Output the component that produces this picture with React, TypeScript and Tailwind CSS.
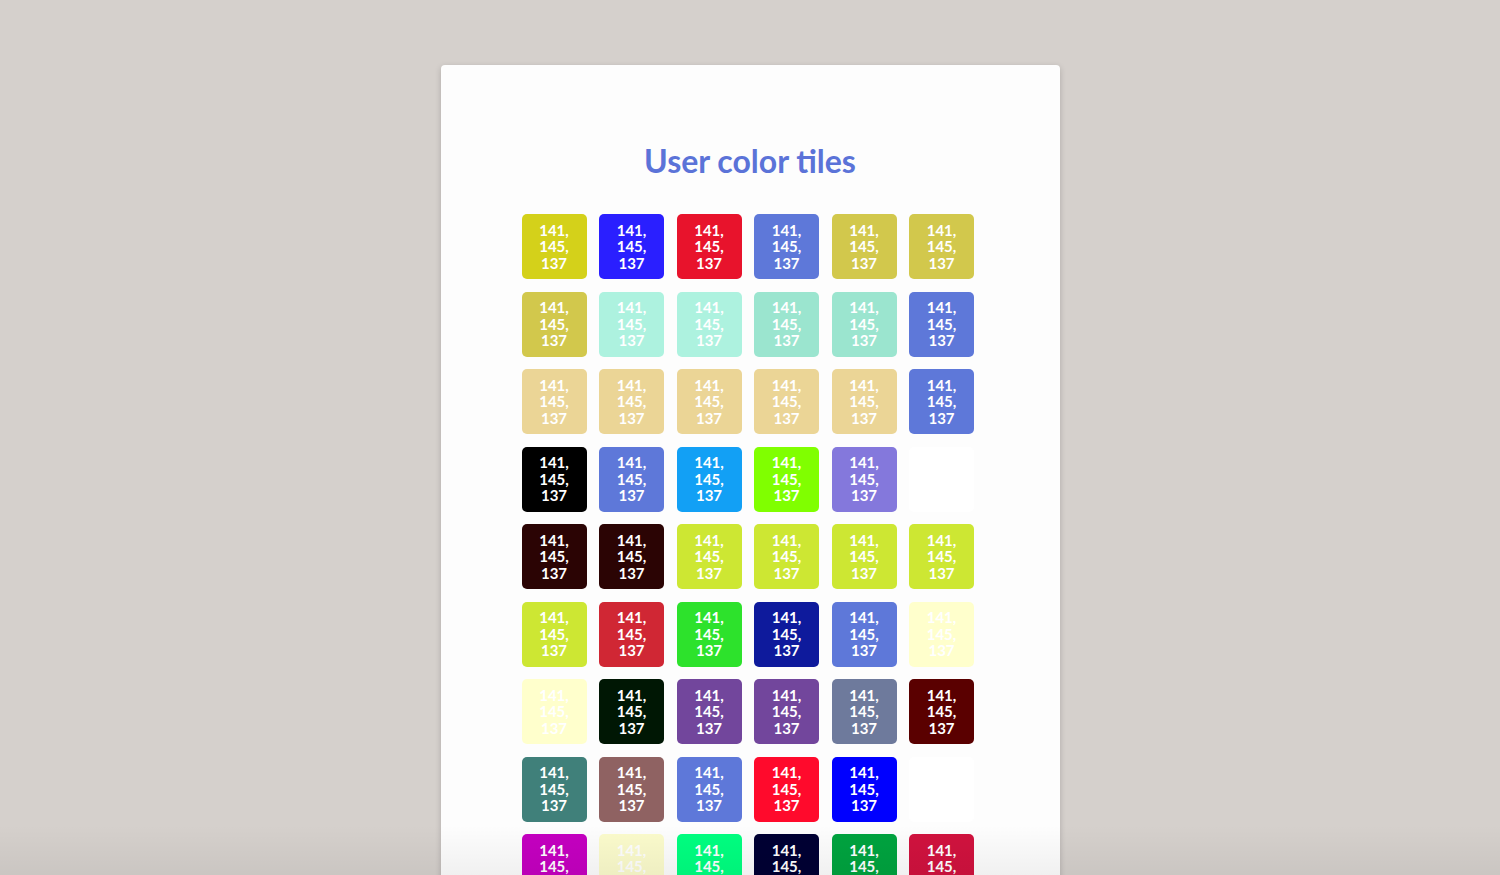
import React from "react";

const rows: string[][] = [
  ["#d4d11a", "#2a1fff", "#e8132c", "#5e78d9", "#d2c84c", "#d2c84c"],
  ["#d2c84c", "#adf2df", "#adf2df", "#9be5cf", "#9be5cf", "#5e78d9"],
  ["#ebd596", "#ebd596", "#ebd596", "#ebd596", "#ebd596", "#5e78d9"],
  ["#000000", "#5e78d9", "#12a0f5", "#80ff00", "#8478dc", "#ffffff"],
  ["#2b0404", "#2b0404", "#cde733", "#cde733", "#cde733", "#cde733"],
  ["#cde733", "#d02734", "#2de22c", "#0e1a9c", "#5e78d9", "#ffffcc"],
  ["#ffffcc", "#001704", "#72469c", "#72469c", "#6e7a9c", "#5a0000"],
  ["#40807a", "#8f6262", "#5e78d9", "#ff0a2c", "#0000ff", "#ffffff"],
  ["#c400c0", "#fbfbcc", "#00ff80", "#000033", "#00a33f", "#d0123e"],
];

export default function App() {
  return (
    <div className="relative h-[875px] w-full overflow-hidden bg-[#d5d0cc]" style={{ fontFamily: "Lato, 'Open Sans', sans-serif" }}>
      <div className="mx-auto mt-[65px] w-[619px] min-h-[900px] rounded-[4px] bg-[#fdfdfd] shadow-[0_2px_6px_rgba(0,0,0,0.18)]">
        <div className="pt-[77px]">
          <h1 className="text-center text-[32px] font-bold leading-[38px] text-[#5b73d8]">User color tiles</h1>
        </div>
        <div className="mt-[34px] pl-[81px]">
          <div className="grid grid-cols-[repeat(6,65px)] gap-[12.5px]">
            {rows.flat().map((c, i) => (
              <div
                key={i}
                className="flex h-[65px] w-[65px] items-center justify-center rounded-[5px] text-center text-[15px] font-bold leading-[16.5px] text-white"
                style={{ backgroundColor: c }}
              >
                141,
                <br />
                145,
                <br />
                137
              </div>
            ))}
          </div>
        </div>
      </div>
      <div className="pointer-events-none absolute bottom-0 left-0 h-[50px] w-full bg-gradient-to-b from-transparent to-[rgba(0,0,0,0.05)]" />
    </div>
  );
}
